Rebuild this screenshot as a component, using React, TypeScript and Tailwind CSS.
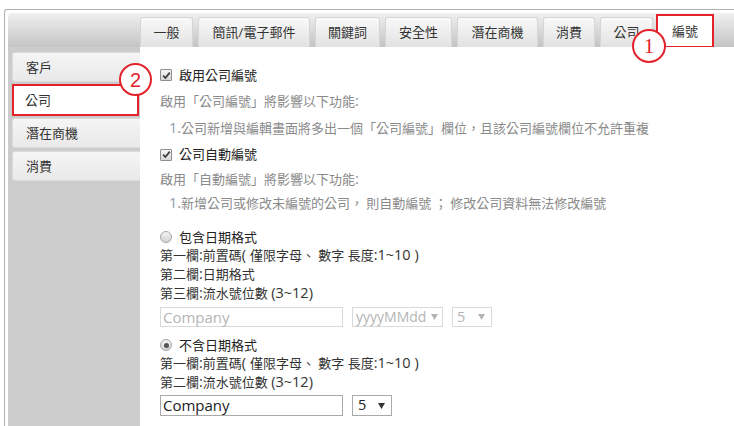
import React from "react";

const font = { fontFamily: '"Open Sans", "Noto Sans CJK TC", sans-serif' };

const tabs = [
  { label: "一般", w: "w-[53px]" },
  { label: "簡訊/電子郵件", w: "w-[112px]" },
  { label: "關鍵詞", w: "w-[65px]" },
  { label: "安全性", w: "w-[67px]" },
  { label: "潛在商機", w: "w-[81px]" },
  { label: "消費", w: "w-[52px]" },
  { label: "公司", w: "w-[53px]" },
];

const sideItems = ["客戶", "公司", "潛在商機", "消費"];

const Checkbox = () => (
  <span className="inline-flex w-[12px] h-[12px] shrink-0 items-center justify-center border border-[#8e8e8e] bg-gradient-to-b from-[#f6f6f6] to-[#d8d8d8] rounded-[1px]">
    <svg width="9" height="9" viewBox="0 0 9 9">
      <path d="M1.2 4.6 L3.4 7 L7.8 1.6" stroke="#3a3a3a" strokeWidth="1.7" fill="none" />
    </svg>
  </span>
);

const Radio = ({ checked }: { checked?: boolean }) => (
  <span className="inline-flex w-[12px] h-[12px] shrink-0 items-center justify-center rounded-full border border-[#a5a5a5] bg-gradient-to-b from-[#f4f4f4] to-[#d2d2d2]">
    {checked ? <span className="w-[5px] h-[5px] rounded-full bg-[#555]" /> : null}
  </span>
);

const Caret = ({ color }: { color: string }) => (
  <svg width="7" height="6" viewBox="0 0 7 6" className="shrink-0">
    <path d="M0 0 H7 L3.5 6 Z" fill={color} />
  </svg>
);

const Annotation = ({ n, className, serif }: { n: string; className: string; serif?: boolean }) => (
  <div
    className={`absolute flex items-center justify-center rounded-full border-2 border-[#e3222b] bg-white text-[#e3222b] leading-none ${className}`}
    style={{ fontFamily: serif ? '"Liberation Serif", serif' : '"Liberation Sans", sans-serif' }}
  >
    {n}
  </div>
);

// latin runs render a little larger than the CJK text in the reference
const L = ({ children }: { children: React.ReactNode }) => <span className="text-[14.5px]">{children}</span>;

export default function App() {
  return (
    <div className="relative w-[734px] h-[426px] overflow-hidden bg-white pl-[4px] pt-[9px] text-[13px] text-[#333]" style={font}>
      <div className="h-full border-l border-t border-[#b0b0b0] rounded-tl-[3px] pl-[3px] pt-[3px]">
        <div className="flex flex-col h-full rounded-tl-[4px] overflow-hidden">
          {/* tab header */}
          <div className="flex items-end h-[34px] shrink-0 pl-[132px] gap-[5px] bg-gradient-to-b from-[#f0f0f0] to-[#c4c4c4]">
            {tabs.map((t) => (
              <div
                key={t.label}
                className={`${t.w} h-[30px] flex items-center justify-center rounded-t-[3px] border border-b-0 border-[#d6d6d6] bg-gradient-to-b from-[#f9f9f9] to-[#e2e2e2] leading-none`}
              >
                {t.label}
              </div>
            ))}
            <div className="w-[58px] h-[34px] -ml-[2px] -mb-px flex items-center justify-center border-2 border-[#e3222b] bg-white leading-none">
              編號
            </div>
          </div>

          <div className="flex flex-1">
            {/* side menu */}
            <div className="w-[132px] shrink-0 bg-[#cccccc] pt-[5px] pl-[4px] flex flex-col gap-[3px]">
              {sideItems.map((s, i) =>
                i === 1 ? (
                  <div key={s} className="h-[32px] -my-px w-[127px] flex items-center pl-[11px] bg-white border-2 border-[#e3222b] leading-none">
                    {s}
                  </div>
                ) : (
                  <div key={s} className="h-[30px] flex items-center pl-[13px] rounded-l-[3px] border border-r-0 border-[#dcdcdc] bg-gradient-to-b from-[#f5f5f5] to-[#e9e9e9] leading-none">
                    {s}
                  </div>
                )
              )}
            </div>

            {/* content */}
            <div className="flex-1 bg-white pl-[20px] pt-[15px] flex flex-col leading-none">
              <div className="h-[26px] flex items-center gap-[7px] text-[#222]">
                <Checkbox />
                <span>啟用公司編號</span>
              </div>
              <div className="h-[27px] flex items-center text-[#8a8a8a]">
                <span>啟用「公司編號」將影響以下功能<L>:</L></span>
              </div>
              <div className="h-[26px] flex items-center pl-[9px] text-[#8a8a8a]">
                <span>
                  <L><span className="text-[#8e9bb0]">1</span>.</L>公司新增與編輯畫面將多出一個「公司編號」欄位，且該公司編號欄位不允許重複
                </span>
              </div>
              <div className="h-[27px] flex items-center gap-[7px] text-[#222]">
                <Checkbox />
                <span>公司自動編號</span>
              </div>
              <div className="h-[22px] flex items-center text-[#8a8a8a]">
                <span>啟用「自動編號」將影響以下功能<L>:</L></span>
              </div>
              <div className="h-[26px] flex items-center pl-[9px] text-[#8a8a8a]">
                <span>
                  <L><span className="text-[#8e9bb0]">1</span>.</L>新增公司或修改未編號的公司<span className="mr-[3px]">，</span>則自動編號<span className="mx-[3px]">；</span>修改公司資料無法修改編號
                </span>
              </div>

              <div className="mt-[12px] h-[18px] flex items-center gap-[7px] text-[#222]">
                <Radio />
                <span>包含日期格式</span>
              </div>
              <div className="h-[18px] flex items-center">
                <span>第一欄<L>:</L>前置碼<L>( </L>僅限字母、 數字 長度<L>:1~10 )</L></span>
              </div>
              <div className="h-[20px] flex items-center">
                <span>第二欄<L>:</L>日期格式</span>
              </div>
              <div className="h-[18px] flex items-center">
                <span>第三欄<L>:</L>流水號位數 <L>(3~12)</L></span>
              </div>
              <div className="mt-[5px] h-[20px] flex items-center">
                <div className="w-[183px] h-[20px] border border-[#d9d9d9] flex items-center pl-[2px] text-[15px] text-[#b5b5b5]">Company</div>
                <div className="ml-[9px] w-[91px] h-[20px] border border-[#d9d9d9] flex items-center gap-[5px] pl-[3px] text-[14px] text-[#b5b5b5]">
                  <span>yyyyMMdd</span>
                  <Caret color="#b5b5b5" />
                </div>
                <div className="ml-[9px] w-[40px] h-[20px] border border-[#d9d9d9] flex items-center justify-between pl-[4px] pr-[6px] text-[14.5px] text-[#b5b5b5]">
                  <span>5</span>
                  <Caret color="#b5b5b5" />
                </div>
              </div>

              <div className="mt-[9px] h-[18px] flex items-center gap-[7px] text-[#222]">
                <Radio checked />
                <span>不含日期格式</span>
              </div>
              <div className="h-[18px] flex items-center">
                <span>第一欄<L>:</L>前置碼<L>( </L>僅限字母、 數字 長度<L>:1~10 )</L></span>
              </div>
              <div className="h-[20px] flex items-center">
                <span>第二欄<L>:</L>流水號位數 <L>(3~12)</L></span>
              </div>
              <div className="mt-[3px] h-[21px] flex items-center">
                <div className="w-[183px] h-[21px] border border-[#a9a9a9] flex items-center pl-[2px] text-[15px] text-[#222]">Company</div>
                <div className="ml-[9px] w-[40px] h-[21px] border border-[#a9a9a9] flex items-center justify-between pl-[5px] pr-[6px] text-[14.5px] text-[#222]">
                  <span>5</span>
                  <Caret color="#333" />
                </div>
              </div>
            </div>
          </div>
        </div>
      </div>

      <Annotation n="1" serif className="left-[632px] top-[29px] w-[34px] h-[34px] text-[21px]" />
      <Annotation n="2" className="left-[119px] top-[63px] w-[33px] h-[33px] text-[20px]" />
    </div>
  );
}
